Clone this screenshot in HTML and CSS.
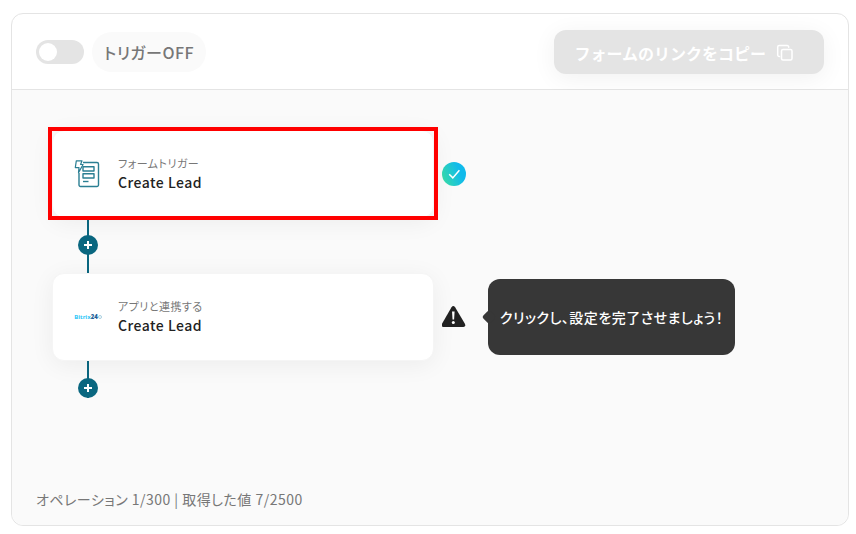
FILE: index.html
```html
<!DOCTYPE html>
<html lang="ja">
<head>
<meta charset="utf-8">
<meta name="viewport" content="width=device-width, initial-scale=1">
<title>Create Lead</title>
<link rel="stylesheet" href="styles.css">
</head>
<body>
<main class="panel">
  <header class="toolbar">
    <div class="trigger">
      <input class="switch" type="checkbox" id="trigger">
      <label class="trigger-label" for="trigger">トリガーOFF</label>
    </div>
    <button class="copy" type="button" disabled>
      <span>フォームのリンクをコピー</span>
      <svg class="copy-icon" viewBox="0 0 18 18" fill="none" stroke="currentColor" stroke-width="1.5" stroke-linejoin="round" stroke-linecap="round" aria-hidden="true">
        <rect x="5.500" y="5.500" width="10.500" height="10.500" rx="1.500"/>
        <path d="M3.500 12.500H3.200a1.500 1.500 0 0 1-1.500-1.500V3A1.500 1.500 0 0 1 3.200 1.500h8A1.500 1.500 0 0 1 12.700 3v.3"/>
      </svg>
    </button>
  </header>
  <section class="flow">
    <div class="step">
      <button class="card card-selected" type="button">
        <svg class="card-icon" viewBox="0 0 28 28" fill="none" stroke="#2b7f93" stroke-width="1.400" stroke-linejoin="round" aria-hidden="true">
          <path d="M9 2.500h14a1.500 1.500 0 0 1 1.500 1.500v21a1.500 1.500 0 0 1-1.500 1.500H6.500A1.500 1.500 0 0 1 5 25V13"/>
          <path d="M2.300.8h5.700L6.600 4.500h2.500L4.500 12.600l.5-5H1.300z" stroke-width="1.200"/>
          <rect x="9" y="6.700" width="11" height="4.300"/>
          <rect x="9" y="13.700" width="11" height="4.300"/>
          <path d="M9 21.500h5.500"/>
        </svg>
        <span class="card-text">
          <span class="card-kind">フォームトリガー</span>
          <span class="card-name">Create Lead</span>
        </span>
      </button>
      <svg class="status" viewBox="0 0 24 24" role="img" aria-label="完了">
        <defs><linearGradient id="done" x1="0" y1=".7" x2="1" y2=".3"><stop offset="0" stop-color="#38dcaa"/><stop offset=".75" stop-color="#10baeb"/></linearGradient></defs>
        <circle cx="12" cy="12" r="12" fill="url(#done)"/>
        <path d="M7.200 12.300l3.600 3.600 6.600-7.600" fill="none" stroke="#fff" stroke-width="1.500"/>
      </svg>
    </div>
    <div class="link">
      <button class="add" type="button" aria-label="追加"></button>
    </div>
    <div class="step">
      <button class="card" type="button">
        <span class="brand"><span>Bitrix</span><b>24</b><i></i></span>
        <span class="card-text">
          <span class="card-kind">アプリと連携する</span>
          <span class="card-name">Create Lead</span>
        </span>
      </button>
      <svg class="status" viewBox="0 0 24 24" role="img" aria-label="警告">
        <path d="M9.500 2.200Q11.300-.2 13.100 2.200L22.900 18.800Q24 21.600 21.400 21.900H1.300Q-1.200 21.600 0 18.800z" fill="#222"/>
        <path d="M10 6.500h2.600l-.5 8h-1.600z" fill="#fff"/>
        <circle cx="11.300" cy="17.500" r="1.500" fill="#fff"/>
      </svg>
      <p class="hint">クリックし、設定を完了させましょう！</p>
    </div>
    <div class="link link-last">
      <button class="add" type="button" aria-label="追加"></button>
    </div>
    <p class="usage">オペレーション 1/300 | 取得した値 7/2500</p>
  </section>
</main>
</body>
</html>
```
FILE: styles.css
```css
* { box-sizing: border-box; }

body {
  margin: 0;
  padding: 13px 7px 8px 11px;
  min-height: 100vh;
  display: flex;
  background: #fff;
  color: #222;
  font-family: "Noto Sans CJK JP", sans-serif;
  font-feature-settings: "palt";
  letter-spacing: 0.03em;
}

button {
  font: inherit;
  letter-spacing: inherit;
  color: inherit;
  border: 0;
}

p { margin: 0; }

.panel {
  flex: 1;
  display: flex;
  flex-direction: column;
  border: 1px solid #e4e4e4;
  border-radius: 12px;
  background: #fff;
}

.toolbar {
  display: flex;
  align-items: center;
  justify-content: space-between;
  padding: 16px 24px 15px;
  border-bottom: 1px solid #e4e4e4;
}

.trigger {
  display: flex;
  align-items: center;
  gap: 8px;
}

.switch {
  appearance: none;
  margin: 0;
  width: 48px;
  height: 24px;
  padding: 3px;
  border-radius: 12px;
  background: #e4e4e4;
}

.switch::before {
  content: "";
  display: block;
  width: 18px;
  height: 18px;
  border-radius: 50%;
  background: #fff;
}

.trigger-label {
  padding: 0 12px;
  border-radius: 20px;
  background: #fafafa;
  color: #777;
  font-size: 16px;
  font-weight: 500;
  line-height: 40px;
}

.copy {
  display: flex;
  align-items: center;
  gap: 10px;
  height: 44px;
  padding: 2px 30px 0 20px;
  border-radius: 12px;
  background: #e4e4e4;
  color: #fff;
  font-size: 16px;
  font-weight: 700;
  font-feature-settings: normal;
  letter-spacing: normal;
  box-shadow: 0 4px 24px rgba(0, 0, 0, 0.06);
}

.copy-icon {
  width: 18px;
  height: 18px;
}

.flow {
  flex: 1;
  display: flex;
  flex-direction: column;
  padding: 40px 24px 14px 40px;
  border-radius: 0 0 12px 12px;
  background: #fafafa;
}

.step {
  display: flex;
  align-items: center;
}

.card {
  position: relative;
  display: flex;
  align-items: center;
  gap: 16px;
  flex: 0 1 382px;
  height: 88px;
  padding: 0 21px;
  border: 1px solid #f5f5f5;
  border-radius: 12px;
  background: #fff;
  text-align: left;
  box-shadow: 0 4px 24px rgba(0, 0, 0, 0.06);
}

.card-selected::after {
  content: "";
  position: absolute;
  inset: -4px -5px -3px;
  border: 4px solid #f00;
}

.card-icon,
.brand {
  flex: none;
  width: 28px;
  height: 28px;
}

.brand {
  display: flex;
  align-items: center;
  justify-content: center;
  color: #2fc7f7;
  font: 700 6px "Noto Sans", sans-serif;
  letter-spacing: 0;
}

.brand b { color: #215f98; }

.brand i {
  width: 4px;
  height: 4px;
  border: 1px solid #a8cfe0;
  border-radius: 50%;
}

.card-text {
  display: flex;
  flex-direction: column;
}

.card-kind {
  color: #777;
  font-size: 11px;
  line-height: 16px;
}

.card-name {
  font-size: 14px;
  font-weight: 500;
  line-height: 22px;
}

.status {
  flex: none;
  width: 24px;
  height: 24px;
  margin-left: 8px;
}

.link {
  display: flex;
  align-items: flex-start;
  width: 20px;
  height: 55px;
  margin-left: 26px;
  padding-top: 17px;
  background: linear-gradient(#0a6780, #0a6780) center / 2px 100% no-repeat;
}

.link-last { height: 37px; }

.add {
  width: 20px;
  height: 20px;
  padding: 0;
  border-radius: 50%;
  background:
    linear-gradient(#fff, #fff) center / 8px 2px no-repeat,
    linear-gradient(#fff, #fff) center / 2px 8px no-repeat,
    #0a6780;
}

.hint {
  position: relative;
  margin-left: 22px;
  padding: 0 12px;
  border-radius: 12px;
  background: #373737;
  color: #fff;
  font-size: 14px;
  font-weight: 500;
  line-height: 76px;
}

.hint::before {
  content: "";
  position: absolute;
  top: 50%;
  left: -4px;
  width: 10px;
  height: 10px;
  margin-top: -5px;
  border-radius: 2px;
  background: #373737;
  transform: rotate(45deg);
}

.usage {
  margin: auto 0 0 -16px;
  color: #777;
  font-size: 14px;
  line-height: 24px;
}
```
